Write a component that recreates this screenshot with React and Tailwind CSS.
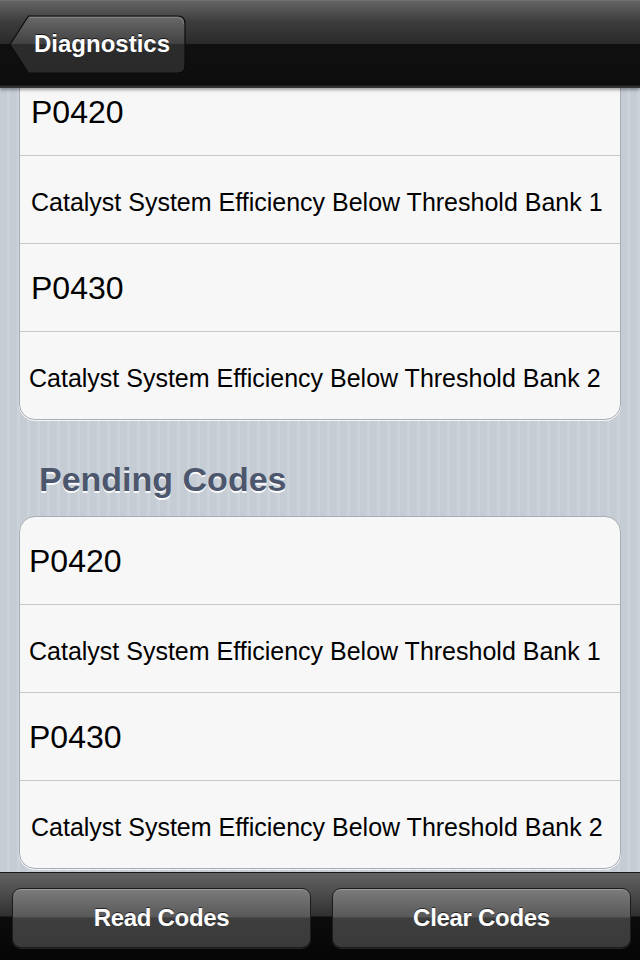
import React from "react";

const font = { fontFamily: '"Liberation Sans", Arial, Helvetica, sans-serif' };

function Row({ children, big, last, pl = "pl-[11px]" }) {
  return (
    <div
      className={`${last ? "h-[87px]" : "h-[88px] border-b border-[#c9c9cb]"} flex items-center ${pl} ${
        big ? "text-[32px]" : "text-[25px] pt-[5px]"
      } text-black`}
    >
      <span className="leading-none">{children}</span>
    </div>
  );
}

function Card({ items, offsets }) {
  return (
    <div className="mx-[19px] rounded-[16px] border border-[#a7adb5] bg-[#f7f7f7] shadow-[0_1px_0_rgba(255,255,255,0.8)] overflow-hidden">
      {items.map((it, i) => (
        <Row key={i} big={it.big} last={i === items.length - 1} pl={offsets[i]}>
          {it.text}
        </Row>
      ))}
    </div>
  );
}

const items = [
  { text: "P0420", big: true },
  { text: "Catalyst System Efficiency Below Threshold Bank 1" },
  { text: "P0430", big: true },
  { text: "Catalyst System Efficiency Below Threshold Bank 2" },
];

function BackButton() {
  return (
    <div className="relative w-[177px] h-[59px] ml-[9px] flex items-center">
      <svg className="absolute inset-0" width="177" height="59" viewBox="0 0 177 59">
        <defs>
          <linearGradient id="bb" x1="0" y1="0" x2="0" y2="1">
            <stop offset="0" stopColor="#6a6a6a" />
            <stop offset="0.5" stopColor="#404040" />
            <stop offset="0.5" stopColor="#2c2c2c" />
            <stop offset="1" stopColor="#2a2a2a" />
          </linearGradient>
        </defs>
        <path
          d="M19.5,1 L168.5,1 Q176,1 176,8.5 L176,50.5 Q176,58 168.5,58 L19.5,58 L1,29.5 Z"
          fill="url(#bb)"
          stroke="#0c0c0c"
          strokeWidth="1.2"
        />
        <path
          d="M20.5,2.5 L168,2.5 Q174.5,2.5 174.5,9"
          fill="none"
          stroke="rgba(255,255,255,0.18)"
          strokeWidth="1"
        />
      </svg>
      <span
        className="relative pl-[25px] text-[24px] font-bold text-white leading-none [text-shadow:0_-1px_0_rgba(0,0,0,0.7)]"
        style={font}
      >
        Diagnostics
      </span>
    </div>
  );
}

function ToolButton({ children }) {
  return (
    <div className="flex-1 h-[60px] rounded-[9px] border border-[#1c1c1c] bg-[linear-gradient(180deg,#7c7c7c_0%,#585858_48%,#3e3e3e_50%,#3a3a3a_100%)] shadow-[inset_0_1px_0_rgba(255,255,255,0.25),0_1px_0_rgba(255,255,255,0.12)] flex items-center justify-center">
      <span className="text-[24px] font-bold text-white leading-none [text-shadow:0_-1px_0_rgba(0,0,0,0.6)] tracking-[-0.3px]">
        {children}
      </span>
    </div>
  );
}

export default function App() {
  return (
    <div className="w-[640px] h-[960px] flex flex-col overflow-hidden bg-black" style={font}>
      {/* Nav bar */}
      <div className="relative z-10 h-[88px] shrink-0 flex items-center bg-[linear-gradient(180deg,#7a7a7a_0px,#646464_1px,#3c3c3c_22px,#2a2a2a_44px,#101010_44px,#0e0e0e_85px,#2a2a2a_86px,#3a3a3a_88px)] shadow-[0_2px_3px_rgba(0,0,0,0.35)]">
        <BackButton />
      </div>

      {/* Content */}
      <div className="flex-1 overflow-hidden bg-[repeating-linear-gradient(90deg,#c5ccd4_0px,#c5ccd4_7px,#cbd2d9_7px,#cbd2d9_10px)]">
        <div className="-mt-[21px]">
          <Card items={items} offsets={["pl-[11px]", "pl-[11px]", "pl-[11px]", "pl-[9px]"]} />
          <div className="pt-[39px] pb-[17px] pl-[39px]">
            <span className="block text-[34px] leading-[40px] font-bold text-[#4c566c] [text-shadow:0_2px_0_rgba(255,255,255,0.9)]">
              Pending Codes
            </span>
          </div>
          <Card items={items} offsets={["pl-[9px]", "pl-[9px]", "pl-[9px]", "pl-[11px]"]} />
        </div>
      </div>

      {/* Toolbar */}
      <div className="h-[88px] shrink-0 border-t border-[#1a1a1a] bg-[linear-gradient(180deg,#626262_0px,#4c4c4c_20px,#303030_43px,#0c0c0c_44px,#050505_88px)] flex items-center gap-[21px] pl-[12px] pr-[9px] pt-[2px]">
        <ToolButton>Read Codes</ToolButton>
        <ToolButton>Clear Codes</ToolButton>
      </div>
    </div>
  );
}
